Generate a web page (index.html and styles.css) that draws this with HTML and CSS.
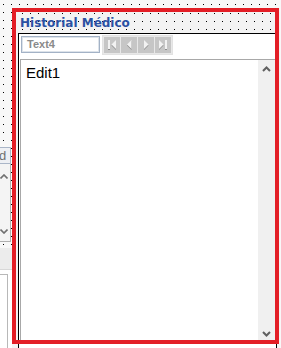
FILE: index.html
```html
<!DOCTYPE html>
<html lang="es">
<head>
<meta charset="utf-8">
<title>Historial Médico</title>
<link rel="stylesheet" href="styles.css">
</head>
<body>
<div class="surface">
  <div class="left-strip">
    <div class="tab-stub">d</div>
    <div class="list-stub">
      <svg class="chev" width="8" height="5" viewBox="0 0 8 5"><path d="M0.5 4.5 L4 1 L7.5 4.5" fill="none" stroke="#707070" stroke-width="1.6"/></svg>
      <svg class="chev" width="8" height="5" viewBox="0 0 8 5"><path d="M0.5 0.5 L4 4 L7.5 0.5" fill="none" stroke="#707070" stroke-width="1.6"/></svg>
    </div>
    <div class="band"></div>
    <div class="box-stub"><div class="box-inner"></div></div>
  </div>

  <div class="frame">
    <div class="title">Historial Médico</div>
    <div class="panel">
      <div class="toolbar">
        <div class="edit-box">Text4</div>
        <div class="nav">
          <div class="nav-btn">
            <svg width="16" height="16" viewBox="0 0 16 16">
              <rect x="4" y="4" width="2" height="9" fill="#8c8c8c"/>
              <rect x="4" y="3" width="2" height="9" fill="#f2f2f2"/>
              <path d="M12 4 L12 13 L7.5 8.5 Z" fill="#8c8c8c"/>
              <path d="M12 3 L12 12 L7.5 7.5 Z" fill="#f2f2f2"/>
            </svg>
          </div>
          <div class="nav-btn">
            <svg width="16" height="16" viewBox="0 0 16 16">
              <path d="M10.5 4 L10.5 13 L6 8.5 Z" fill="#8c8c8c"/>
              <path d="M10.5 3 L10.5 12 L6 7.5 Z" fill="#f2f2f2"/>
            </svg>
          </div>
          <div class="nav-btn">
            <svg width="16" height="16" viewBox="0 0 16 16">
              <path d="M6 4 L6 13 L10.5 8.5 Z" fill="#8c8c8c"/>
              <path d="M6 3 L6 12 L10.5 7.5 Z" fill="#f2f2f2"/>
            </svg>
          </div>
          <div class="nav-btn">
            <svg width="16" height="16" viewBox="0 0 16 16">
              <path d="M4 4 L4 13 L8.5 8.5 Z" fill="#8c8c8c"/>
              <path d="M4 3 L4 12 L8.5 7.5 Z" fill="#f2f2f2"/>
              <rect x="10" y="4" width="2" height="9" fill="#8c8c8c"/>
              <rect x="10" y="3" width="2" height="9" fill="#f2f2f2"/>
            </svg>
          </div>
        </div>
      </div>
      <div class="memo">
        <div class="memo-text">Edit1</div>
        <div class="scrollbar">
          <div class="sb-btn">
            <svg width="9" height="6" viewBox="0 0 9 6"><path d="M1 5 L4.5 1.5 L8 5" fill="none" stroke="#606060" stroke-width="2"/></svg>
          </div>
          <div class="sb-btn">
            <svg width="9" height="6" viewBox="0 0 9 6"><path d="M1 1 L4.5 4.5 L8 1" fill="none" stroke="#606060" stroke-width="2"/></svg>
          </div>
        </div>
      </div>
    </div>
    <div class="selection"></div>
  </div>
</div>
</body>
</html>
```
FILE: styles.css
```css
html, body {
  margin: 0;
  padding: 0;
}

body {
  width: 281px;
  height: 348px;
  overflow: hidden;
  background-color: #f8f8f8;
  background-image:
    linear-gradient(#f8f8f8 7px, transparent 7px),
    linear-gradient(90deg, #f8f8f8 7px, #000 7px);
  background-size: 8px 8px;
  background-position: 4px 5px;
  font-family: "Liberation Sans", Arial, sans-serif;
}

.surface {
  display: flex;
  height: 348px;
}

.left-strip {
  width: 12px;
  flex: none;
  display: flex;
  flex-direction: column;
}

.tab-stub {
  margin-top: 147px;
  width: 11px;
  height: 17px;
  box-sizing: border-box;
  border: 1px solid #aab6c8;
  border-left: none;
  background: #eef0f4;
  color: #707070;
  font-size: 13px;
  line-height: 15px;
  text-indent: -1px;
  overflow: hidden;
}

.list-stub {
  width: 11px;
  height: 78px;
  box-sizing: border-box;
  border-right: 1px solid #b0b0b0;
  border-bottom: 1px solid #b0b0b0;
  background: #f4f4f4;
  display: flex;
  flex-direction: column;
  justify-content: space-between;
  padding: 10px 0 7px 0;
}

.chev {
  display: block;
}

.band {
  margin-top: 6px;
  height: 21px;
  background: #ececec;
  border-bottom: 1px solid #d8d8d8;
}

.box-stub {
  flex: 1;
  background: #fff;
  padding-top: 4px;
}

.box-inner {
  width: 8px;
  height: 100%;
  box-sizing: border-box;
  border-top: 1px solid #b8b8b8;
  border-right: 1px solid #b8b8b8;
}

.frame {
  position: relative;
  width: 268px;
  height: 340px;
  margin-top: 8px;
  flex: none;
  display: flex;
  flex-direction: column;
  background-color: #f3f3f3;
  background-image:
    linear-gradient(#f3f3f3 7px, transparent 7px),
    linear-gradient(90deg, #f3f3f3 7px, #000 7px);
  background-size: 8px 8px;
  background-position: 3px 6px;
}

.title {
  height: 25px;
  box-sizing: border-box;
  padding: 8px 0 0 8px;
  font-family: "DejaVu Sans", Verdana, sans-serif;
  font-size: 12px;
  line-height: 15px;
  font-weight: bold;
  color: #2b51a3;
  white-space: nowrap;
}

.panel {
  flex: 1;
  margin: 0 3px 0 6px;
  border: 1px solid #000;
  border-bottom: none;
  background: #fff;
  display: flex;
  flex-direction: column;
}

.toolbar {
  display: flex;
  align-items: flex-start;
  gap: 2px;
  padding: 1px 0 0 2px;
}

.edit-box {
  margin-top: 1px;
  width: 79px;
  height: 17px;
  box-sizing: border-box;
  border: 1px solid #a3b2c6;
  box-shadow: inset 0 0 0 1px #dde3ea;
  padding-left: 5px;
  font-size: 11px;
  line-height: 15px;
  font-weight: bold;
  color: #8a8a8a;
}

.nav {
  display: flex;
  gap: 1px;
  padding: 1px;
  border: 1px solid #e2e2e2;
  background: #e8e8e8;
}

.nav-btn {
  width: 16px;
  height: 16px;
  background: #c6c6c6;
}

.nav-btn svg {
  display: block;
}

.memo {
  margin: 4px 0 0 1px;
  width: 256px;
  height: 284px;
  box-sizing: border-box;
  border: 1px solid #a8a8a8;
  display: flex;
}

.memo-text {
  flex: 1;
  padding: 4px 0 0 5px;
  font-size: 15px;
  line-height: 17px;
  color: #000;
}

.scrollbar {
  width: 17px;
  background: #f0f0f0;
  display: flex;
  flex-direction: column;
  justify-content: space-between;
}

.sb-btn {
  height: 17px;
  display: flex;
  align-items: center;
  justify-content: center;
}

.sb-btn svg {
  display: block;
}

.selection {
  position: absolute;
  left: 0;
  top: 0;
  width: 267px;
  height: 336px;
  box-sizing: border-box;
  border: 4px solid #e31e26;
  pointer-events: none;
}
```
